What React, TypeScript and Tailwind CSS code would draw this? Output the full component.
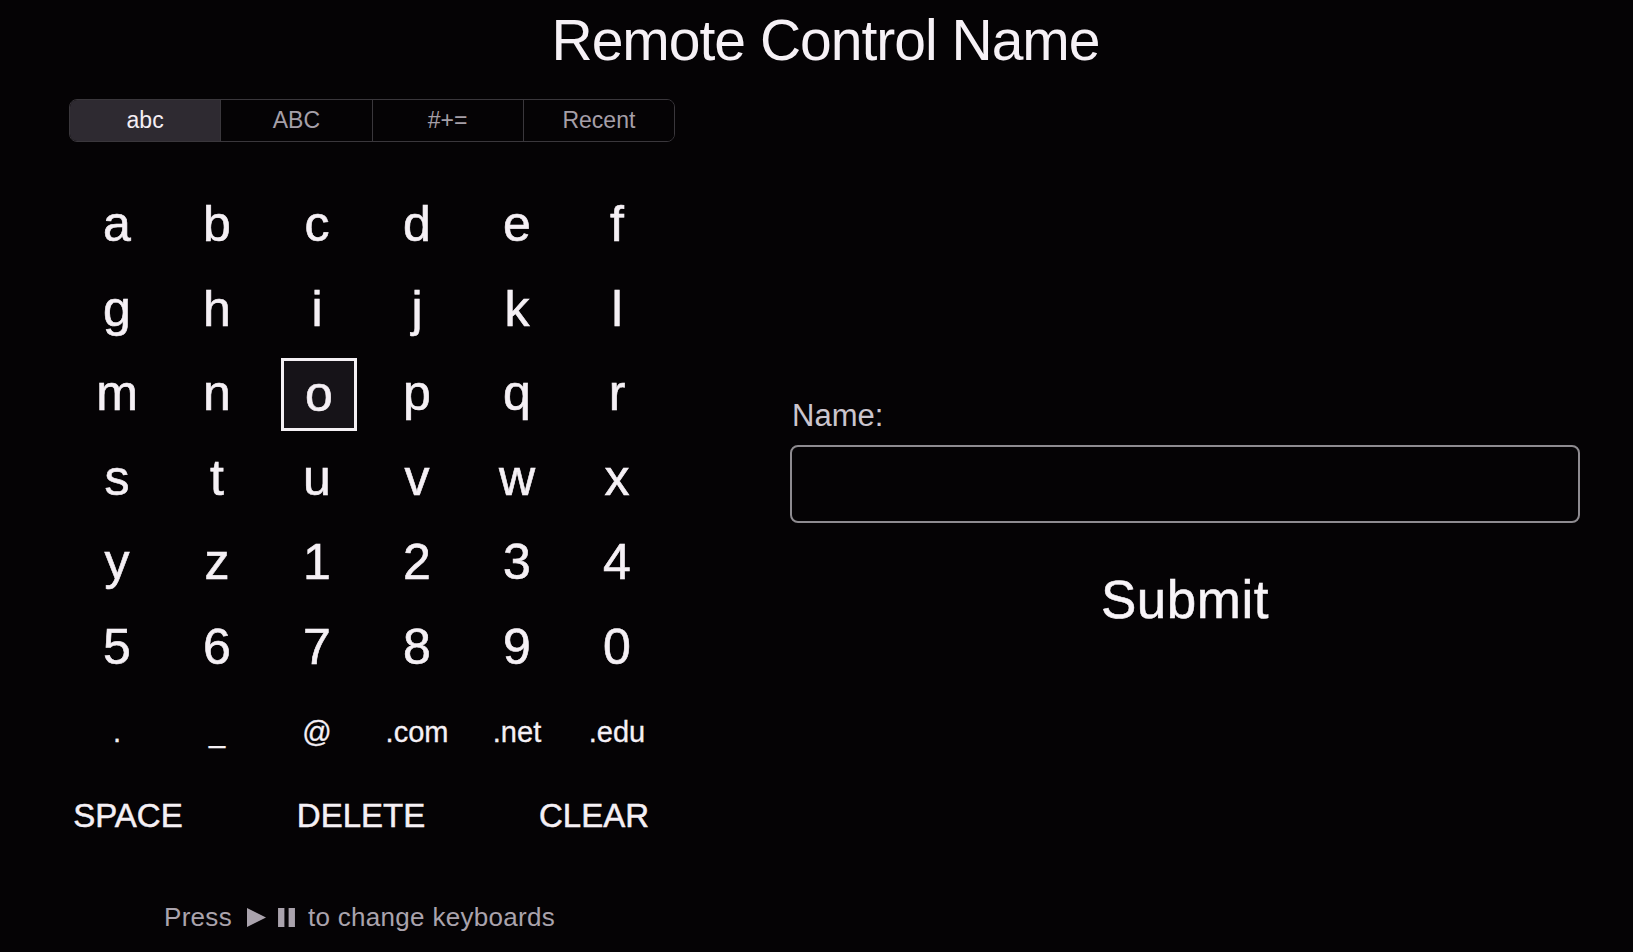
import React from "react";

const rows: string[][] = [
  ["a", "b", "c", "d", "e", "f"],
  ["g", "h", "i", "j", "k", "l"],
  ["m", "n", "o", "p", "q", "r"],
  ["s", "t", "u", "v", "w", "x"],
  ["y", "z", "1", "2", "3", "4"],
  ["5", "6", "7", "8", "9", "0"],
];

const specials = [".", "_", "@", ".com", ".net", ".edu"];

const tabs = ["abc", "ABC", "#+=", "Recent"];

export default function App() {
  return (
    <div className="w-full h-[952px] bg-[#050305] text-[#f5f0f5] font-['Liberation_Sans',Arial,sans-serif] overflow-hidden flex flex-col">
      {/* Title */}
      <div className="pt-[12px] flex justify-center pl-[18px]">
        <h1 className="text-[57px] leading-[57px] tracking-[-1px] font-normal text-[#f6f1f6]">
          Remote Control Name
        </h1>
      </div>

      <div className="flex flex-1">
        {/* Left: keyboard */}
        <div className="w-[720px] flex flex-col">
          {/* Segmented tabs */}
          <div className="ml-[69px] mt-[30px] w-[606px] h-[43px] flex rounded-[8px] border border-[#3a373c] overflow-hidden">
            {tabs.map((t, i) => (
              <div
                key={t}
                className={
                  i === 0
                    ? "flex-1 flex items-center justify-center bg-[#2e2a31] text-[#f4eef4] text-[23px]"
                    : "flex-1 flex items-center justify-center bg-[#050305] text-[#a59fa8] text-[23px] border-l border-[#3a373c]"
                }
              >
                {t}
              </div>
            ))}
          </div>

          {/* Character grid */}
          <div className="ml-[67px] mt-[40px] grid grid-cols-[repeat(6,100px)] [-webkit-text-stroke:0.6px_#f5f0f5]">
            {rows.map((row, ri) =>
              row.map((ch) => (
                <div
                  key={`${ri}-${ch}`}
                  className="h-[84.6px] flex items-center justify-center text-[50px] leading-[84.6px]"
                >
                  {ch === "o" ? (
                    <div className="w-[76px] h-[73px] mt-[2px] border-[3px] border-[#f4f0f4] bg-[#161318] flex items-center justify-center translate-x-[2px] leading-[67px]">
                      o
                    </div>
                  ) : (
                    ch
                  )}
                </div>
              ))
            )}
            {specials.map((s) => (
              <div
                key={s}
                className="h-[84.6px] flex items-center justify-center text-[29px] leading-[84.6px] [-webkit-text-stroke:0.3px_#f5f0f5]"
              >
                {s}
              </div>
            ))}
          </div>

          {/* Action row */}
          <div className="ml-[28px] mt-[25px] grid grid-cols-[200px_200px_200px] gap-x-[33px] text-[33px] leading-[33px] [-webkit-text-stroke:0.5px_#f5f0f5]">
            <div className="text-center">SPACE</div>
            <div className="text-center">DELETE</div>
            <div className="text-center">CLEAR</div>
          </div>

          {/* Hint */}
          <div className="ml-[164px] mt-[72px] flex items-center text-[26px] leading-[26px] tracking-[0.3px] text-[#aaa3ad]">
            <span>Press</span>
            <svg
              className="ml-[15px]"
              width="19"
              height="19"
              viewBox="0 0 18 18"
              fill="#aaa3ad"
            >
              <polygon points="0,0 18,9 0,18" />
            </svg>
            <svg
              className="ml-[12px]"
              width="17"
              height="19"
              viewBox="0 0 16 18"
              fill="#aaa3ad"
            >
              <rect x="0" y="0" width="6" height="18" />
              <rect x="10" y="0" width="6" height="18" />
            </svg>
            <span className="ml-[13px]">to change keyboards</span>
          </div>
        </div>

        {/* Right: form */}
        <div className="flex flex-col ml-[70px] w-[790px]">
          <div className="mt-[331px] ml-[2px] text-[31px] leading-[31px] text-[#cbc5ce]">
            Name:
          </div>
          <div className="mt-[14px] h-[78px] w-[790px] rounded-[8px] border-2 border-[#8e8b90] bg-[#050305]" />
          <div className="mt-[50px] flex justify-center">
            <span className="text-[53px] leading-[53px] tracking-[0.5px] text-[#f8f4f8] [-webkit-text-stroke:0.5px_#f8f4f8]">
              Submit
            </span>
          </div>
        </div>
      </div>
    </div>
  );
}
